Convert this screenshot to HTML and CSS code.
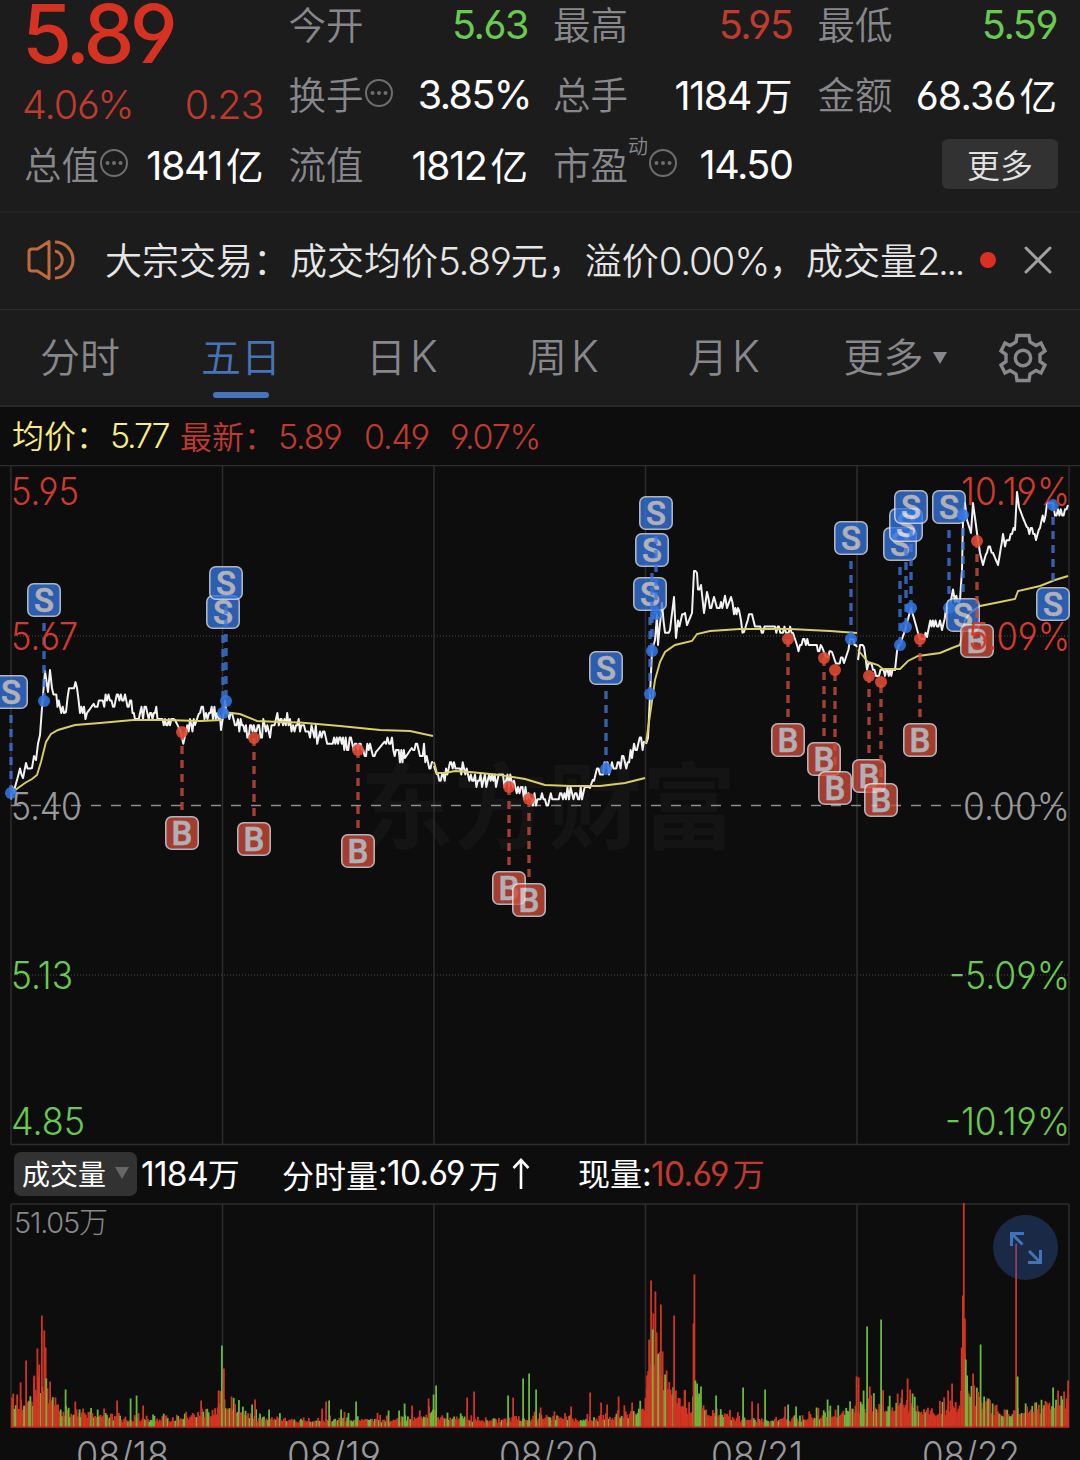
FILE: index.html
```html
<!DOCTYPE html>
<html lang="zh-CN">
<head>
<meta charset="utf-8">
<title>五日行情</title>
<link rel="stylesheet" href="styles.css">
</head>
<body>
<header class="quote">
  <div class="col">
    <div class="price">5.89</div>
    <div class="row change"><span>4.06%</span><span>0.23</span></div>
    <div class="row"><span class="label">总值</span><svg class="tip" viewBox="0 0 30 30"><circle cx="15" cy="15" r="13"/><path d="M8.500 15h.01M15 15h.01M21.500 15h.01"/></svg><span class="value">1841<i>亿</i></span></div>
  </div>
  <div class="col">
    <div class="row"><span class="label">今开</span><span class="value down">5.63</span></div>
    <div class="row"><span class="label">换手</span><svg class="tip" viewBox="0 0 30 30"><circle cx="15" cy="15" r="13"/><path d="M8.500 15h.01M15 15h.01M21.500 15h.01"/></svg><span class="value percent">3.85%</span></div>
    <div class="row"><span class="label">流值</span><span class="value">1812<i>亿</i></span></div>
  </div>
  <div class="col">
    <div class="row"><span class="label">最高</span><span class="value up">5.95</span></div>
    <div class="row"><span class="label">总手</span><span class="value">1184<i>万</i></span></div>
    <div class="row"><span class="label">市盈</span><sup class="mark">动</sup><svg class="tip" viewBox="0 0 30 30"><circle cx="15" cy="15" r="13"/><path d="M8.500 15h.01M15 15h.01M21.500 15h.01"/></svg><span class="value">14.50</span></div>
  </div>
  <div class="col">
    <div class="row"><span class="label">最低</span><span class="value down">5.59</span></div>
    <div class="row"><span class="label">金额</span><span class="value amount">68.36<i>亿</i></span></div>
    <div class="row"><button class="more">更多</button></div>
  </div>
</header>

<section class="notice">
  <svg class="speaker" viewBox="0 0 50 42"><path d="M22 2.500V39.500L10.500 32H5Q2 32 2 29V13Q2 10 5 10H10.500Z"/><path d="M28 12a9.200 9.200 0 0 1 0 18M28 3a18 18 0 0 1 0 36"/></svg>
  <p class="notice-text">大宗交易：成交均价<b>5.89</b>元，溢价<b>0.00%</b>，成交量<b class="cut">2...</b></p>
  <span class="dot"></span>
  <svg class="close" viewBox="0 0 28 28"><path d="M2 2L26 26M26 2L2 26"/></svg>
</section>

<nav class="tabs">
  <a class="tab">分时</a>
  <a class="tab active">五日</a>
  <a class="tab">日<b>K</b></a>
  <a class="tab">周<b>K</b></a>
  <a class="tab">月<b>K</b></a>
  <a class="tab menu">更多<span class="caret"></span></a>
  <a class="settings"><svg viewBox="-25 -25 50 50"><path d="M-6-22.500H6L7-16 13-12.500 18-15 22-7 17-3.500V3.500L22 7 18 15 13 12.500 7 16 6 22.500H-6L-7 16-13 12.500-18 15-22 7-17 3.500V-3.500L-22-7-18-15-13-12.500-7-16Z"/><circle r="7.700"/></svg></a>
</nav>

<div class="legend">
  <span class="avg">均价：<b>5.77</b></span>
  <span class="last">最新：</span><b class="n1">5.89</b><b class="n2">0.49</b><b class="n3">9.07%</b>
</div>

<svg class="price-chart" viewBox="0 465 1080 681" id="price"></svg>

<div class="volume-bar">
  <button class="picker">成交量<span class="caret"></span></button>
  <span class="total"><b>1184</b>万</span>
  <span class="minute">分时量<b>:10.69</b><span class="unit">万</span><svg class="arrow" viewBox="0 0 18 32"><path d="M9 31V2M1.500 10L9 2L16.500 10"/></svg></span>
  <span class="current">现量<b>:</b><span class="up"><b>10.69</b><span class="unit">万</span></span></span>
</div>

<div class="volume-wrap">
  <svg class="volume-chart" viewBox="0 1203 1080 257" id="volume"></svg>
  <button class="expand"><svg viewBox="0 0 34 34"><path d="M2.500 15V2.500H15M3 3L13.500 13.500M31.500 19V31.500H19M31 31L20 20"/></svg></button>
</div>
<script src="chart.js"></script>
</body>
</html>
```
FILE: styles.css
```css
* { box-sizing: border-box; }
body {
  margin: 0;
  width: 1080px;
  height: 1460px;
  overflow: hidden;
  background: #0d0d0d;
  color: #fff;
  font: 350 37.5px/1 "Noto Sans CJK SC", sans-serif;
}
b, i { font-style: normal; font-weight: inherit; }
b, .price, .change, .value { font-family: Inter, "Noto Sans CJK SC", sans-serif; font-feature-settings: "cv03", "cv04"; }
button { border: 0; padding: 0; font: inherit; color: inherit; }
svg { display: block; flex: none; }
.up { color: #c03a2e; }
.down { color: #6ac950; }

.quote {
  display: grid;
  grid-template-columns: repeat(4, 1fr);
  gap: 25px;
  height: 211px;
  padding: 0 23px 0 24px;
  background: #1c1c1c;
}
.col { display: flex; flex-direction: column; gap: 20px; }
.row { display: flex; align-items: center; height: 50px; white-space: nowrap; }
.label { padding-bottom: 4px; color: #88888c; }
.value { margin-left: auto; padding-top: 2px; font-size: 39.5px; font-weight: 400; letter-spacing: -1.4px; }
.value i { display: inline-block; padding-bottom: 3px; font: 400 37.500px/1 "Noto Sans CJK SC", sans-serif; letter-spacing: 0; margin-left: 4px; }
.percent { margin-right: -3px; letter-spacing: -1.6px; }
.amount { letter-spacing: -.9px; }
.price { height: 68px; margin: 0 0 -8px -2px; font-size: 81px; line-height: 69px; font-weight: 550; letter-spacing: -4.6px; color: #d63222; }
.change { justify-content: space-between; margin: 0 0 -10px -2px; padding-top: 2px; color: #c03a2e; font-size: 39.5px; letter-spacing: -1px; }
.tip { width: 30px; height: 30px; margin: -4px 0 0 0; fill: none; stroke: #6e6e70; stroke-width: 2; stroke-linecap: round; }
.tip path { stroke-width: 4; }
.mark { align-self: flex-start; margin-top: -4px; font-size: 20px; line-height: 20px; color: #88888c; }
.more { width: 116px; height: 50px; margin: -2px -1px 0 auto; border-radius: 6px; background: #323232; color: #e2e2e2; font-size: 33px; line-height: 44px; }

.notice { display: flex; align-items: center; height: 99px; padding: 0 26px 2px 27px; border-top: 2px solid #242424; border-bottom: 1px solid #2c2c2c; background: #1c1c1c; }
.speaker { width: 50px; height: 42px; fill: none; stroke: #c26a3b; stroke-width: 3; stroke-linejoin: round; }
.notice-text { margin: 0 0 0 28px; width: 875px; font-size: 37px; line-height: 50px; white-space: nowrap; color: #e6e6e6; }
.notice-text b { font-size: 38.5px; letter-spacing: -1.2px; }
.notice-text .cut { letter-spacing: -2.6px; }
.dot { flex: none; width: 16px; height: 16px; border-radius: 50%; background: #da3022; }
.close { width: 28px; height: 28px; margin-left: 28px; stroke: #a0a0a0; stroke-width: 3; stroke-linecap: round; }

.tabs { display: flex; height: 97px; background: #1c1c1c; border-bottom: 2px solid #282828; color: #88888c; font-size: 40px; }
.tab { position: relative; width: 161px; padding-right: 1px; line-height: 91px; text-align: center; white-space: nowrap; }
.tab b { margin-left: 4px; font-size: 43px; font-weight: 300; }
.active { color: #4873b8; }
.active::after { content: ""; position: absolute; left: 52px; bottom: 7px; width: 56px; height: 6px; border-radius: 3px; background: #4873b8; }
.caret { display: inline-block; border: 7px solid transparent; border-top: 12px solid #88888c; border-bottom: 0; }
.menu { padding-right: 4px; }
.menu .caret { margin: 0 -23px 8px 9px; }
.settings { display: flex; flex: 1; align-items: center; justify-content: center; }
.settings svg { width: 50px; height: 50px; fill: none; stroke: #88888c; stroke-width: 3.400; }

.legend { display: flex; align-items: center; height: 58px; padding: 0 0 2px 12px; font-size: 32px; line-height: 40px; white-space: nowrap; color: #c03a2e; }
.legend b { font-size: 34px; letter-spacing: -1.200px; }
.legend > b { padding-top: 3px; }
.avg { width: 168px; color: #f6ec84; }
.avg b { margin-left: 2px; letter-spacing: -2.2px; }
.last { width: 98px; }
.n1, .n2 { width: 86px; }

.price-chart { width: 1080px; height: 681px; }
.volume-chart { width: 1080px; height: 257px; }

.volume-bar { display: flex; align-items: center; height: 57px; padding: 0 0 1px 14px; font-size: 32px; font-weight: 400; white-space: nowrap; }
.volume-bar b { font-size: 33.5px; letter-spacing: -.7px; }
.unit { margin-left: 4px; }
.picker { display: flex; align-items: center; gap: 9px; width: 123px; height: 44px; padding: 0 0 2px 8px; border-radius: 7px; background: #323232; font-size: 28px; }
.picker .caret { border-top-color: #666; }
.total { width: 145px; padding-left: 4px; }
.minute { display: flex; align-items: center; width: 296px; }
.arrow { width: 18px; height: 32px; margin-left: 11px; fill: none; stroke: #fff; stroke-width: 2.600; }

.volume-wrap { position: relative; }
.expand { position: absolute; left: 993px; top: 12px; width: 65px; height: 65px; border-radius: 50%; background: rgba(48, 88, 158, .4); }
.expand svg { width: 34px; height: 34px; margin: 0 auto; fill: none; stroke: #4272b8; stroke-width: 3; }

.axis text, .dates text, .scale { font-family: Inter, "Noto Sans CJK SC", sans-serif; font-weight: 300; font-size: 38px; font-feature-settings: "cv03", "cv04"; }
.scale { font-size: 29px; fill: #88888c; }
.dates text { fill: #99999b; }
.axis .red { fill: #d23a2d; }
.green { fill: #6ac950; }
.gray { fill: #99999b; }
.grid-line { stroke: #2d2d2d; stroke-width: 1.500; fill: none; }
.dotted { stroke: #383838; stroke-dasharray: 1 2; }
.zero { stroke: #8d8d8d; stroke-width: 1.500; stroke-dasharray: 10 10; }
.watermark { font: 700 94px "Noto Sans CJK SC", sans-serif; fill: #141414; }
.line { fill: none; stroke: #f2f2f2; stroke-width: 2; stroke-linejoin: round; }
.mean { fill: none; stroke: #d8cf66; stroke-width: 1.900; }
.badge { opacity: .78; }
.badge rect { stroke: #e0e4ee; stroke-width: 1.600; }
.badge text { font: 500 33px Roboto, sans-serif; fill: #dedee6; stroke: #dedee6; stroke-width: .6; text-anchor: middle; }
.stem { stroke-width: 3.400; stroke-dasharray: 8 6; opacity: .78; }
.sell rect, .sell circle { fill: #3474e0; }
.sell .stem { stroke: #3f78dc; }
.buy rect { fill: #cf4b38; }
.buy circle { fill: #e24a36; }
.buy .stem { stroke: #cf4d3e; }
.pin { opacity: .88; }
```
FILE: chart.js
```js
let seed = 20;
const rnd = () => (seed = (seed * 16807) % 2147483647) / 2147483647;
const columns = [11, 222.5, 434, 645.5, 857, 1069];

// Price polylines, one per trading day: x,y pairs
const days = [
  [11,793,15,785,17,780,20,769,23,778,26,763,29,774,32,768,34,757,36,760,38,745,40,735,42,708,45,671,48,692,50,670,52,690,55,695,60,705,64,711,66,712,69,684,71,692,74,689,77,688,80,711,84,706,87,713,95,702,100,706,107,697,113,703,118,698,125,699,130,704,135,712,140,716,146,711,150,715,155,711,160,716,165,722,170,726,175,720,182,734,186,736,190,727,195,725,200,710,206,710,209,718,213,716,220,716,221,730,225,705,228,712,232,719,238,722,242,728,250,730,255,736,262,729,270,728,276,722,283,720,290,724,296,727,304,730,313,731,320,736,323,731,330,741,338,735,343,743,355,742,358,750,362,747,370,750,376,752,386,740,392,748,400,755,405,758,413,746,420,750,428,757,433,762],
  [434,766,438,778,446,772,450,768,454,764,460,770,464,770,468,778,475,783,482,783,492,777,500,778,509,780,514,788,518,786,524,790,530,796,536,801,542,797,548,802,555,801,560,793,566,796,572,792,578,792,590,788,594,776,600,774,606,768,612,764,622,762,632,758,634,745,644,741],
  [646,743,648,738,650,695,652,650,655,640,657,615,658,645,662,603,665,638,670,630,674,597,676,638,678,623,685,613,687,625,692,613,694,572,697,573,698,593,701,585,704,613,707,592,710,605,714,597,717,608,725,600,727,608,731,597,734,608,739,610,741,622,744,632,749,616,755,625,763,628,773,626,775,630,783,628,793,633,797,645,803,645,813,642,818,650,822,647,827,660,832,652,837,667,841,658,844,663,850,645,852,637,857,647],
  [858,660,860,647,864,647,867,667,870,663,873,672,882,672,885,670,890,675,895,670,897,650,900,645,905,630,911,608,915,622,920,640,927,637,929,625,934,622,937,630,940,623,942,630,946,613,950,605,953,590,955,600,960,600,962,570,963,520,965,503,967,520,971,533,973,503,977,533,980,553,983,565,987,550,990,547,993,553,998,565,1003,535,1005,545,1008,540,1012,532,1015,530,1017,492,1019,507,1023,518,1028,530,1032,530,1036,540,1040,525,1044,517,1047,507,1053,503,1055,515,1058,510,1065,515,1068,505]
];
const means = [
  [11,793,18,788,25,783,32,779,37,775,41,762,46,742,51,734,58,730,75,725,100,723,133,720,165,720,200,721,222,720],
  [223,712,240,714,257,721,280,722,300,722.5,340,726,380,730,410,731,433,736],
  [434,762,437,773,445,773,455,771,470,772,500,775,525,779,545,785,570,786,600,786,625,783,645,778],
  [646,743,650,715,655,680,660,662,665,652,675,645,692,641,697,634,710,631,740,629,790,629,830,631,857,633],
  [858,650,868,662,878,665,883,669,900,669,908,661,918,656,940,653,952,648,960,645,965,620,970,613,980,606,1000,602,1015,599,1018,591,1040,586,1055,580,1068,576]
];

// Prices move in 0.01 ticks, 6.17px each
const tick = 6.17;
const jitter = (pts, i) => {
  let out = '';
  for (let k = 0; k < pts.length - 2; k += 2) {
    const [x0, y0, x1, y1] = pts.slice(k, k + 4);
    const steep = Math.abs(y1 - y0) > 10;
    const n = Math.max(1, Math.round((x1 - x0) / 1.4));
    for (let j = 0; j < n; j++) {
      let y = y0 + (y1 - y0) * j / n;
      if (!steep) y = 805.5 - Math.round((805.5 - y + (rnd() - .5) * (i > 1 ? 8 : 15)) / tick) * tick;
      out += (out ? 'L' : 'M') + (x0 + (x1 - x0) * j / n).toFixed(1) + ' ' + y.toFixed(1);
    }
  }
  return out + 'L' + pts.slice(-2).join(' ');
};

// kind, x, badge y, point y
const marks = [
  ['S',11,692,793],['S',44,600,701],['S',223,612,713],['S',226,583,701],['S',606,668,769],
  ['S',650,594,694],['S',652,550,651],['S',656,513,614],['S',851,538,639],['S',900,544,645],
  ['S',906,525,627],['S',911,507,608],['S',949,507,608],['S',963,615,515],['S',1053,604,505],
  ['B',182,833,732],['B',254,839,738],['B',358,851,750],['B',509,888,787],['B',529,900,799],
  ['B',788,740,639],['B',824,759,658],['B',835,788,670],['B',869,776,676],['B',881,800,682],
  ['B',920,740,639],['B',977,641,541]
];
const mark = ([k, x, b, p]) => {
  const d = p > b ? 1 : -1;
  return `<g class="${k === 'S' ? 'sell' : 'buy'}"><line class="stem" x1="${x}" x2="${x}" y1="${b + 23 * d}" y2="${p}"/>
  <circle class="pin" cx="${x}" cy="${p}" r="6"/>
  <g class="badge"><rect x="${x - 16.2}" y="${b - 16.2}" width="32.4" height="32.400" rx="6"/><text x="${x}" y="${b + 11.7}">${k}</text></g></g>`;
};

const verticals = (a, b) => columns.map(x => `<path class="grid-line" d="M${x} ${a}V${b}"/>`).join('');
const label = (t, x, y, w, c, right) =>
  `<text class="${c}" x="${right ? x - w : x}" y="${y}" textLength="${w}" lengthAdjust="spacingAndGlyphs">${t}</text>`;

document.getElementById('price').innerHTML =
  `<text class="watermark" x="360" y="842" textLength="376">东方财富</text>
  <path class="grid-line" d="M0 465.500H1080M11 1144.500H1069"/>${verticals(466, 1145)}
  <path class="grid-line dotted" d="M11 636H1069M11 975H1069"/>
  <path class="zero" d="M11 805.500H1069"/>` +
  days.map((d, i) => `<path class="line" d="${jitter(d, i)}"/>`).join('') +
  means.map(m => `<polyline class="mean" points="${m.join(' ')}"/>`).join('') +
  marks.map(mark).join('') +
  '<g class="axis">' +
  label('5.95', 11, 505, 68, 'red') + label('5.67', 11, 650, 67, 'red') + label('5.40', 11, 820, 71, 'gray') +
  label('5.13', 11, 989, 62, 'green') + label('4.85', 11, 1135, 74, 'green') +
  label('10.19%', 1070, 505, 109, 'red', 1) + label('5.09%', 1070, 650, 102, 'red', 1) +
  label('0.00%', 1070, 820, 107, 'gray', 1) + label('-5.09%', 1070, 989, 121, 'green', 1) +
  label('-10.19%', 1070, 1135, 125, 'green', 1) + '</g>';

// Typical bar height along the time axis: x, height
const envelope = [11,38,20,30,34,55,44,58,52,40,60,28,80,24,120,13,170,13,205,22,222,36,240,25,258,15,300,11,360,15,400,12,425,21,440,19,470,15,500,10,540,16,590,13,630,22,644,32,650,120,662,95,672,48,690,32,697,44,710,24,740,14,790,12,830,21,857,33,880,34,905,38,930,24,957,33,963,90,972,46,1000,22,1040,29,1055,40,1069,46];
const level = x => {
  let k = 0;
  while (k < envelope.length - 4 && envelope[k + 2] < x) k += 2;
  const [x0, h0, x1, h1] = envelope.slice(k, k + 4);
  return h0 + (h1 - h0) * (x - x0) / (x1 - x0);
};
// Individual spikes: x, height, colour
const spikes = [
  [12,30,'r'],[17,33,'r'],[20.500,45,'r'],[24,22,'g'],[26,67,'r'],[34,50,'r'],[37.300,79,'r'],[39,63,'r'],[41.800,112,'r'],[44.200,97,'r'],[45.500,80,'r'],[46.200,49,'g'],[50,46,'r'],[65.500,38,'g'],[79.500,18,'g'],[83,19,'r'],[104,19,'r'],[117,27,'r'],[130.500,29,'g'],[136.500,32,'g'],[143,22,'r'],[201,27,'r'],[218.500,37,'r'],[221.800,82,'g'],[223.800,59,'r'],[231.500,31,'r'],[252,23,'g'],[255,28,'r'],[269,18,'g'],[322,19,'r'],[326,26,'r'],[329,27,'g'],[341,18,'g'],[356,26,'g'],
  [388.500,17,'g'],[399,17,'g'],[404.500,24,'g'],[412,22,'r'],[428.500,29,'r'],[433.500,33,'g'],[436,42,'g'],[467,30,'r'],[474,36,'r'],[508,32,'g'],[513,30,'r'],[523,49,'g'],[529,54,'g'],[536,38,'g'],[540.500,20,'r'],[571,21,'r'],[590,35,'r'],[601,25,'r'],[607,23,'r'],[618.500,31,'r'],[632,25,'r'],[647,52,'r'],[649,88,'r'],[651,147,'r'],[652.600,98,'g'],[655.300,136,'r'],[656.500,95,'r'],[658.200,74,'g'],[660.800,123,'r'],[662.500,76,'r'],[665,53,'g'],[674,112,'r'],[684.500,37,'r'],[693.400,104,'r'],[694.300,153,'r'],[695.300,47,'g'],[697,44,'g'],[699,34,'g'],[716,32,'g'],
  [743,40,'g'],[752,26,'r'],[758,24,'r'],[765,38,'g'],[785,21,'r'],[788,23,'g'],[796,21,'g'],[816.500,20,'g'],[827.500,28,'g'],[856.500,51,'r'],[858.500,50,'r'],[863.500,37,'g'],[867,101,'g'],[869.700,41,'r'],[881,108,'g'],[902,38,'r'],[907.500,49,'r'],[910,38,'r'],[912.500,34,'g'],[944,30,'r'],[948,37,'r'],[952,44,'r'],[961.600,80,'r'],[962.800,132,'r'],[963.700,225,'r'],[964.800,109,'r'],[965.700,68,'g'],[967,52,'g'],[973,54,'r'],[980.500,83,'g'],[984,31,'g'],[988,27,'g'],[1016,184,'r'],[1017.500,51,'g'],[1027,21,'r'],[1053,40,'g'],[1058,37,'r'],[1064,36,'r'],[1068,47,'r']
];
const bar = (x, h, c) => `<rect x="${x.toFixed(2)}" y="${(1427.5 - h).toFixed(1)}" width="1.800" height="${h.toFixed(1)}" fill="${c === 'r' ? '#d23423' : '#68b83c'}"/>`;
let bars = '';
for (let x = 11; x < 1068; x += 1.32) {
  const h = Math.max(2, level(x) * (.38 + .7 * rnd() * rnd() + .15 * rnd()));
  bars += bar(x, h, rnd() < .7 ? 'r' : 'g');
}
bars += spikes.map(([x, h, c]) => bar(x - .8, h, c)).join('');

document.getElementById('volume').innerHTML =
  `<path class="grid-line" d="M11 1204H1069"/>${verticals(1204, 1428)}${bars}
  <rect x="11" y="1426.500" width="1058" height="1.500" fill="#a82318"/>
  <text class="scale" x="14" y="1233" textLength="94">51.05万</text><g class="dates">` +
  ['08/18', '08/19', '08/20', '08/21', '08/22'].map((d, i) => label(d, [76, 287, 499, 711, 922][i], 1469, [93, 94, 99, 92, 98][i], '')).join('') + '</g>';
```
